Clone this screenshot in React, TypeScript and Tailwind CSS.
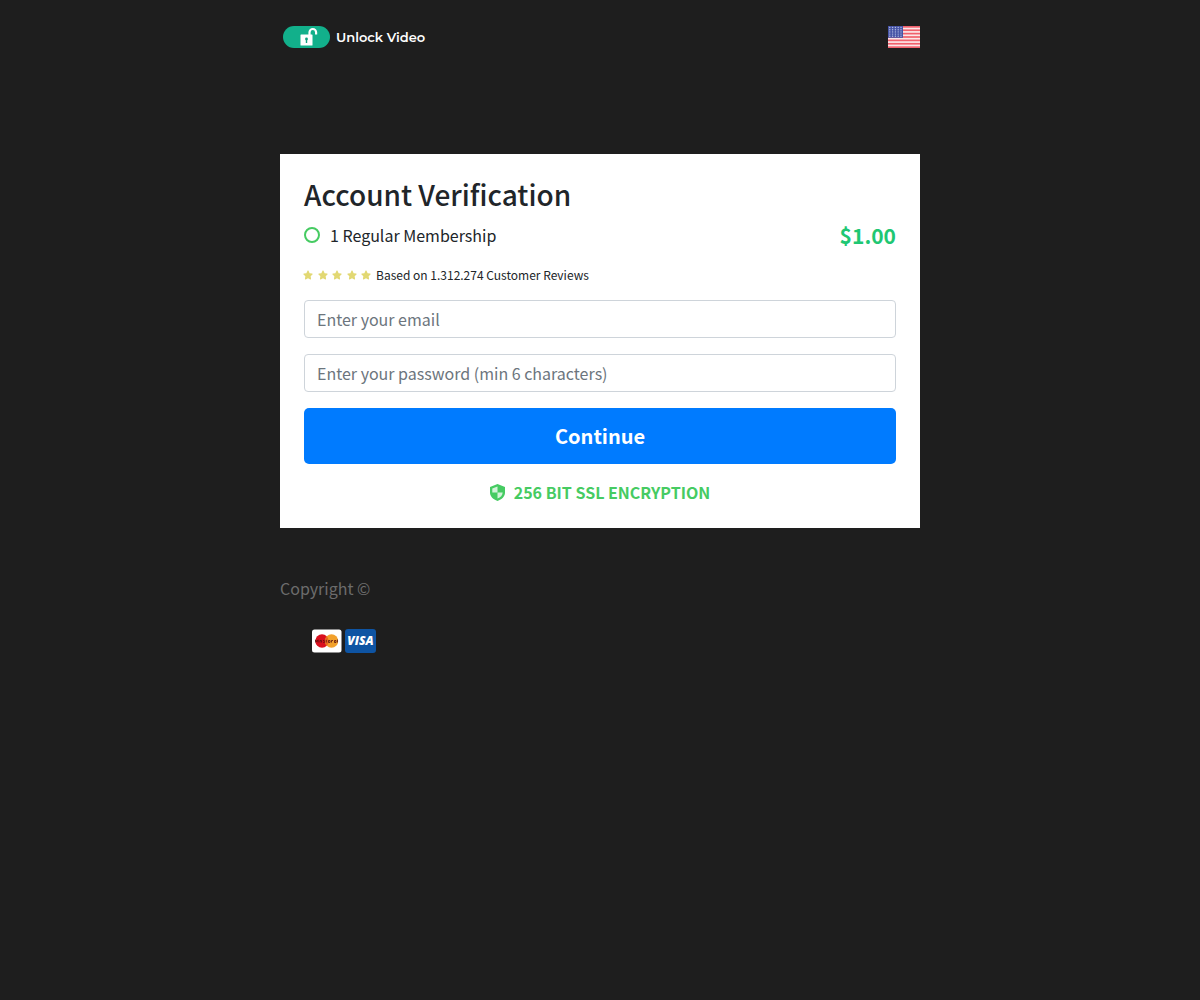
import { FaStar } from "react-icons/fa";

const FONT = "font-['Noto_Sans_CJK_JP','Noto_Sans_CJK_SC',sans-serif]";

function UnlockLogo() {
  return (
    <svg className="w-12 h-6" viewBox="0 0 48 24" aria-hidden="true">
      <rect x="0" y="1" width="47" height="22" rx="11" fill="#12b08b" />
      <rect x="17.5" y="9.5" width="12" height="11" rx="0.6" fill="#fff" />
      <path
        d="M26.5 10.5V7.3a3.3 3.3 0 0 1 6.6 0V9.5"
        fill="none"
        stroke="#fff"
        strokeWidth="2.2"
      />
      <circle cx="23.5" cy="14" r="1.4" fill="#12a07e" />
      <path d="M22.8 14h1.4v4h-1.4z" fill="#12a07e" />
    </svg>
  );
}

function FlagUS() {
  const stripes = [0, 1, 2, 3, 4, 5, 6];
  const rows = [0, 1, 2, 3, 4];
  const cols = [0, 1, 2, 3, 4];
  return (
    <svg className="w-8 h-[22px]" viewBox="0 0 32 22" aria-hidden="true">
      <rect width="32" height="22" fill="#fbe6e8" />
      {stripes.map((i) => (
        <rect key={i} y={(i * 44) / 13} width="32" height={22 / 13} fill="#f0606c" />
      ))}
      <rect width="15" height="11.8" fill="#4654a6" />
      {rows.map((r) =>
        cols.map((c) => (
          <circle key={`${r}-${c}`} cx={1.8 + c * 2.8} cy={1.5 + r * 2.2} r="0.7" fill="#b4bce2" />
        ))
      )}
    </svg>
  );
}

function ShieldIcon() {
  return (
    <svg className="w-4 h-[18px]" viewBox="0 0 16 18" aria-hidden="true">
      <path d="M7.5 1 15 4v5.500c0 4-3.200 7-7.500 8.500C3.200 16.500 0 13.500 0 9.500V4z" fill="#46cb62" />
      <path d="M7.500 3.500v6H2.300v-4z" fill="#d3f3da" />
      <path d="M7.500 9.500h5.200c-.2 2.800-2.200 4.900-5.200 6z" fill="#d3f3da" />
    </svg>
  );
}

function Mastercard() {
  return (
    <svg className="w-[30px] h-6" viewBox="0 0 30 24" role="img" aria-label="Mastercard">
      <rect y="0.5" width="29.5" height="23" rx="2.5" fill="#fff" />
      <circle cx="10" cy="12" r="6.7" fill="#d9101f" />
      <circle cx="19.5" cy="12" r="6.7" fill="#f2a12c" />
      <path d="M14.75 7.3a6.7 6.7 0 0 1 0 9.4a6.7 6.7 0 0 1 0-9.4z" fill="#e8681f" />
      <path
        d="M3.5 13.5V10.8l1.3 2 1.3-2v2.7M8 13.5v-2h1.500v2M11 11.5h1.500M11 13.3h1.500v-1M14.3 10.8v2.7M16.5 11.5h1.500v2h-1.500zM19.5 13.5v-2h1.500M22.5 11.5h1.500v2h-1.500zM25.5 10.5v3"
        fill="none"
        stroke="#5c1010"
        strokeWidth="0.8"
      />
    </svg>
  );
}

function Visa() {
  return (
    <span className="flex w-[31px] h-6 items-center justify-center rounded-[3px] bg-[#0e54a3] font-['Open_Sans',sans-serif] text-xs leading-none font-extrabold italic text-white">
      VISA
    </span>
  );
}

const inputClass =
  "block w-full h-[38px] px-3 rounded border border-[#ced4da] bg-white text-base text-[#495057] placeholder:text-[#6c757d] placeholder:opacity-100";

export default function App() {
  return (
    <div className={`min-h-screen bg-[#1e1e1e] text-base text-[#212529] ${FONT}`}>
      <div className="mx-auto max-w-2xl px-4">
        <header className="flex items-center justify-between pt-6 pb-26">
          <a href="#" className="flex items-center gap-[5px] pl-[3px] py-px">
            <UnlockLogo />
            <span className="font-['Montserrat','Inter',sans-serif] text-[13px] leading-6 font-semibold text-white">
              Unlock Video
            </span>
          </a>
          <button type="button" aria-label="Language: English (US)">
            <FlagUS />
          </button>
        </header>

        <main className="bg-white p-6">
          <h1 className="text-[28px] leading-8 font-medium">Account Verification</h1>
          <form onSubmit={(e) => e.preventDefault()}>
            <div className="flex items-center justify-between pt-[9px]">
              <label className="flex items-center gap-[10px]">
                <input
                  type="radio"
                  name="plan"
                  className="size-4 appearance-none rounded-full border-2 border-[#46cb62]"
                />
                1 Regular Membership
              </label>
              <span className="text-[21px] leading-8 font-bold text-[#1fc773]">$1.00</span>
            </div>

            <div className="flex items-center gap-[5px] pt-[14px] pb-[15px] text-xs leading-5">
              <span className="-ml-px flex w-[68px] justify-between text-[#e2d873]">
                {[1, 2, 3, 4, 5].map((n) => (
                  <FaStar key={n} className="size-[10px]" />
                ))}
              </span>
              <span>Based on 1.312.274 Customer Reviews</span>
            </div>

            <input type="email" aria-label="Email" placeholder="Enter your email" className={inputClass} />
            <input
              type="password"
              aria-label="Password"
              placeholder="Enter your password (min 6 characters)"
              className={`mt-4 ${inputClass}`}
            />
            <button
              type="submit"
              className="mt-4 h-14 w-full rounded-[5px] bg-[#007bff] text-xl font-bold text-white"
            >
              Continue
            </button>
          </form>
          <p className="flex items-center justify-center gap-2 pt-4 font-bold text-[#46cb62]">
            <ShieldIcon />
            256 BIT SSL ENCRYPTION
          </p>
        </main>

        <footer className="pt-12">
          <p className="text-[#6c6c6c]">Copyright ©</p>
          <div className="flex gap-[3px] pt-[29px] pl-8">
            <Mastercard />
            <Visa />
          </div>
        </footer>
      </div>
    </div>
  );
}
